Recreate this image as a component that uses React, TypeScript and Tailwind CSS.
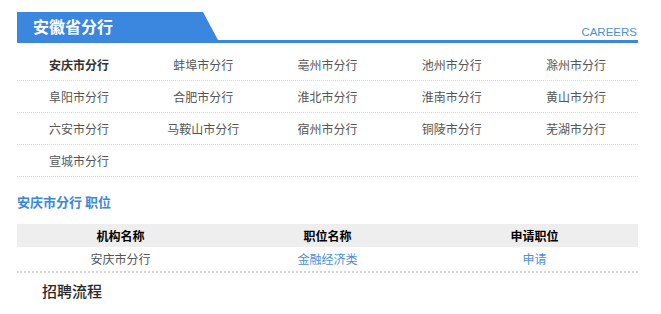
const BLUE = "#3b86df";

const branches = [
  "安庆市分行",
  "蚌埠市分行",
  "亳州市分行",
  "池州市分行",
  "滁州市分行",
  "阜阳市分行",
  "合肥市分行",
  "淮北市分行",
  "淮南市分行",
  "黄山市分行",
  "六安市分行",
  "马鞍山市分行",
  "宿州市分行",
  "铜陵市分行",
  "芜湖市分行",
  "宣城市分行",
];

export default function App() {
  const rows: string[][] = [];
  for (let i = 0; i < branches.length; i += 5) rows.push(branches.slice(i, i + 5));

  return (
    <div
      className="min-h-[314px] bg-white pt-[12px]"
      style={{ fontFamily: '"Microsoft YaHei", "Noto Sans CJK SC", "Noto Sans", sans-serif' }}
    >
      <div className="ml-[17px] w-[621px]">
        {/* header */}
        <div className="flex items-end justify-between border-b-[3px] border-[#3b86df]">
          <div
            className="flex h-[28px] w-[201px] items-center pl-[16px] text-[16px] font-bold text-white [clip-path:polygon(0_0,186px_0,201px_100%,0_100%)]"
            style={{ backgroundColor: BLUE }}
          >
            安徽省分行
          </div>
          <span
            className="pb-[2px] pr-[1px] text-[11.5px] leading-none text-[#4a8fe0]"
            style={{ fontFamily: '"Liberation Sans", Arial, sans-serif' }}
          >
            CAREERS
          </span>
        </div>

        {/* branch grid */}
        <div className="mt-[6px]">
          {rows.map((row, ri) => (
            <div key={ri} className="grid h-[32px] grid-cols-5 border-b border-dotted border-[#d8d8d8]">
              {row.map((name) => (
                <div
                  key={name}
                  className={
                    name === "安庆市分行"
                      ? "flex items-center justify-center text-[12px] font-bold text-[#333]"
                      : "flex items-center justify-center text-[12px] text-[#555]"
                  }
                >
                  {name}
                </div>
              ))}
            </div>
          ))}
        </div>

        {/* positions */}
        <div className="mt-[15px] text-[13px] font-bold leading-[20px] text-[#3b86df]">安庆市分行 职位</div>

        <div className="mt-[12px] border-b-2 border-dotted border-[#d4d4d4]">
          <div className="grid h-[23px] grid-cols-3 bg-[#eeeeee] text-[12px] font-bold text-black">
            <div className="flex items-center justify-center">机构名称</div>
            <div className="flex items-center justify-center">职位名称</div>
            <div className="flex items-center justify-center">申请职位</div>
          </div>
          <div className="grid h-[24px] grid-cols-3 text-[12px]">
            <div className="flex items-center justify-center text-[#555]">安庆市分行</div>
            <div className="flex items-center justify-center text-[#4a8fe0]">金融经济类</div>
            <div className="flex items-center justify-center text-[#4a8fe0]">申请</div>
          </div>
        </div>

        <div className="mt-[8px] pl-[25px] text-[15px] font-medium leading-[20px] text-[#2a2a2a]">招聘流程</div>
      </div>
    </div>
  );
}
